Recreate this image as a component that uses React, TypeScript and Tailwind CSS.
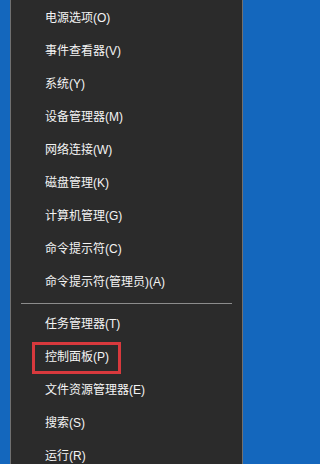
const topItems = [
  "电源选项(O)",
  "事件查看器(V)",
  "系统(Y)",
  "设备管理器(M)",
  "网络连接(W)",
  "磁盘管理(K)",
  "计算机管理(G)",
  "命令提示符(C)",
  "命令提示符(管理员)(A)",
];

const bottomItems = [
  "任务管理器(T)",
  "控制面板(P)",
  "文件资源管理器(E)",
  "搜索(S)",
  "运行(R)",
];

function MenuItem({ label, marked }: { label: string; marked?: boolean }) {
  return (
    <div className="relative flex h-[33px] shrink-0 items-center pl-[34px] text-[12px] leading-none text-[#f4f4f4]">
      {label}
      {marked && (
        <div className="absolute left-[21px] top-[1px] h-[32px] w-[89px] border-[3px] border-[#d8393d]" />
      )}
    </div>
  );
}

export default function App() {
  return (
    <div
      className="flex h-[464px] w-full min-w-[251px] overflow-hidden bg-[#1467bd]"
      style={{ fontFamily: '"Liberation Sans", "Noto Sans CJK SC", sans-serif' }}
    >
      <div className="ml-[10px] flex w-[233px] shrink-0 flex-col border-x border-[#707070] bg-[#2b2b2b] pt-[1.5px]">
        {topItems.map((item) => (
          <MenuItem key={item} label={item} />
        ))}
        <div className="mx-[10px] my-[4px] h-px shrink-0 bg-[#8c8c8c]" />
        {bottomItems.map((item) => (
          <MenuItem key={item} label={item} marked={item === "控制面板(P)"} />
        ))}
      </div>
    </div>
  );
}
